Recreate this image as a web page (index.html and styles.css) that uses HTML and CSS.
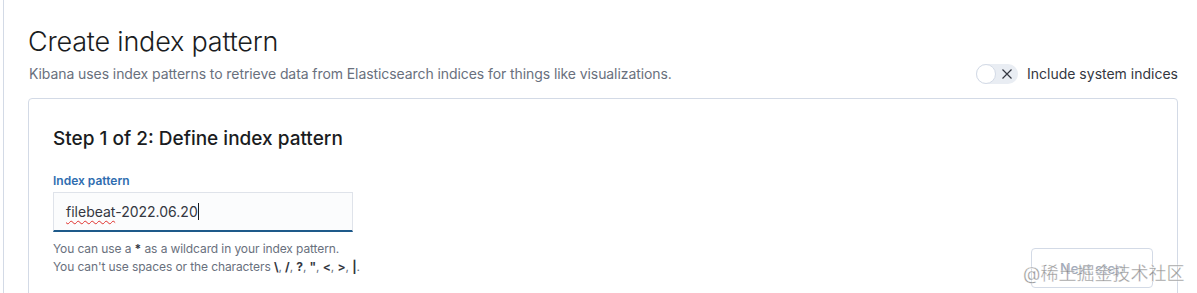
FILE: index.html
```html
<!DOCTYPE html>
<html lang="en">
<head>
    <meta charset="UTF-8">
    <title>Create index pattern</title>
    <link rel="stylesheet" href="styles.css">
</head>
<body>
<div class="page">
    <div class="page-header">
        <div class="page-header-text">
            <h1 class="page-title">Create index pattern</h1>
            <p class="page-desc">Kibana uses index patterns to retrieve data from Elasticsearch indices for things like visualizations.</p>
        </div>
        <label class="switch">
            <span class="switch-track">
                <span class="switch-thumb"></span>
                <svg class="switch-icon" width="12" height="12" viewBox="0 0 12 12">
                    <path d="M1.5 1.5 L10.5 10.5 M10.5 1.5 L1.5 10.5" stroke="#343741" stroke-width="1.2" fill="none"/>
                </svg>
            </span>
            <span class="switch-label">Include system indices</span>
        </label>
    </div>

    <div class="card">
        <h2 class="step-title">Step 1 of 2: Define index pattern</h2>
        <div class="step-body">
            <div class="form-row">
                <div class="form-label">Index pattern</div>
                <div class="field">
                    <span class="misspelled">filebeat</span>-2022.06.20<span class="caret"></span>
                </div>
                <div class="help-text">
                    You can use a <b>*</b> as a wildcard in your index pattern.<br>
                    You can't use spaces or the characters <b>\</b>, <b>/</b>, <b>?</b>, <b>"</b>, <b>&lt;</b>, <b>&gt;</b>, <b>|</b>.
                </div>
            </div>
            <button class="btn-next" disabled>Next step</button>
        </div>
    </div>
</div>
<div class="watermark">@稀土掘金技术社区</div>
</body>
</html>
```

FILE: styles.css
```css
html, body{
    margin: 0;
    padding: 0;
    height: 293px;
    overflow: hidden;
    background: #ffffff;
    font-family: Inter, "Noto Sans CJK SC", sans-serif;
    color: #343741;
}
.page{
    margin-left: 3px;
    border-left: 1px solid #d3dae6;
    padding: 24px 19px 0 24px;
    height: 100%;
    box-sizing: border-box;
}
.page-header{
    display: flex;
    justify-content: space-between;
    align-items: flex-end;
}
.page-title{
    margin: 0;
    font-size: 27px;
    line-height: 36px;
    font-weight: 300;
    color: #1a1c21;
    letter-spacing: -0.2px;
}
.page-desc{
    margin: 4px 0 0 1px;
    font-size: 14px;
    line-height: 20px;
    color: #69707d;
    letter-spacing: -0.08px;
}
.switch{
    display: flex;
    align-items: center;
}
.switch-track{
    position: relative;
    width: 42px;
    height: 20px;
    border-radius: 10px;
    background: #e9edf3;
    display: flex;
    align-items: center;
    justify-content: flex-end;
    padding-right: 5px;
    box-sizing: border-box;
}
.switch-thumb{
    position: absolute;
    left: 0;
    top: 0;
    width: 20px;
    height: 20px;
    border-radius: 50%;
    background: #ffffff;
    border: 1px solid #d3dae6;
    box-sizing: border-box;
}
.switch-label{
    margin-left: 9px;
    font-size: 14px;
    line-height: 20px;
    color: #343741;
}
.card{
    margin-top: 14px;
    border: 1px solid #d3dae6;
    border-radius: 4px;
    padding: 24px 24px 40px 24px;
    background: #ffffff;
}
.step-title{
    margin: 2px 0 0 0;
    font-size: 19px;
    line-height: 28px;
    font-weight: 500;
    color: #1a1c21;
}
.step-body{
    display: flex;
    justify-content: space-between;
    align-items: flex-start;
    margin-top: 20px;
}
.form-label{
    font-size: 12px;
    line-height: 16px;
    font-weight: 600;
    color: #2f6db0;
    margin-bottom: 3px;
}
.field{
    width: 300px;
    height: 40px;
    box-sizing: border-box;
    padding: 0 12px;
    background: #fbfcfd;
    border: 1px solid #dfe3ea;
    border-bottom: 2px solid #1e5a8a;
    font-size: 14px;
    line-height: 38px;
    color: #343741;
}
.misspelled{
    text-decoration: underline wavy #e0312d;
    text-decoration-thickness: 1px;
    text-underline-offset: 3px;
}
.caret{
    display: inline-block;
    width: 1px;
    height: 17px;
    background: #1a1c21;
    vertical-align: -3px;
}
.help-text{
    margin-top: 8px;
    font-size: 12px;
    line-height: 18px;
    color: #69707d;
    letter-spacing: -0.1px;
}
.help-text b{
    color: #343741;
    font-weight: 700;
}
.btn-next{
    margin-top: 75px;
    width: 122px;
    height: 40px;
    border: 1px solid #d3dae6;
    border-radius: 4px;
    background: #ffffff;
    font-family: Inter, sans-serif;
    font-size: 14px;
    font-weight: 500;
    color: #a2abba;
}
.watermark{
    position: absolute;
    left: 1023px;
    top: 262px;
    font-size: 18px;
    line-height: 24px;
    color: rgba(120, 120, 120, 0.75);
    -webkit-text-stroke: 0.3px #ffffff;
    white-space: nowrap;
}
```
